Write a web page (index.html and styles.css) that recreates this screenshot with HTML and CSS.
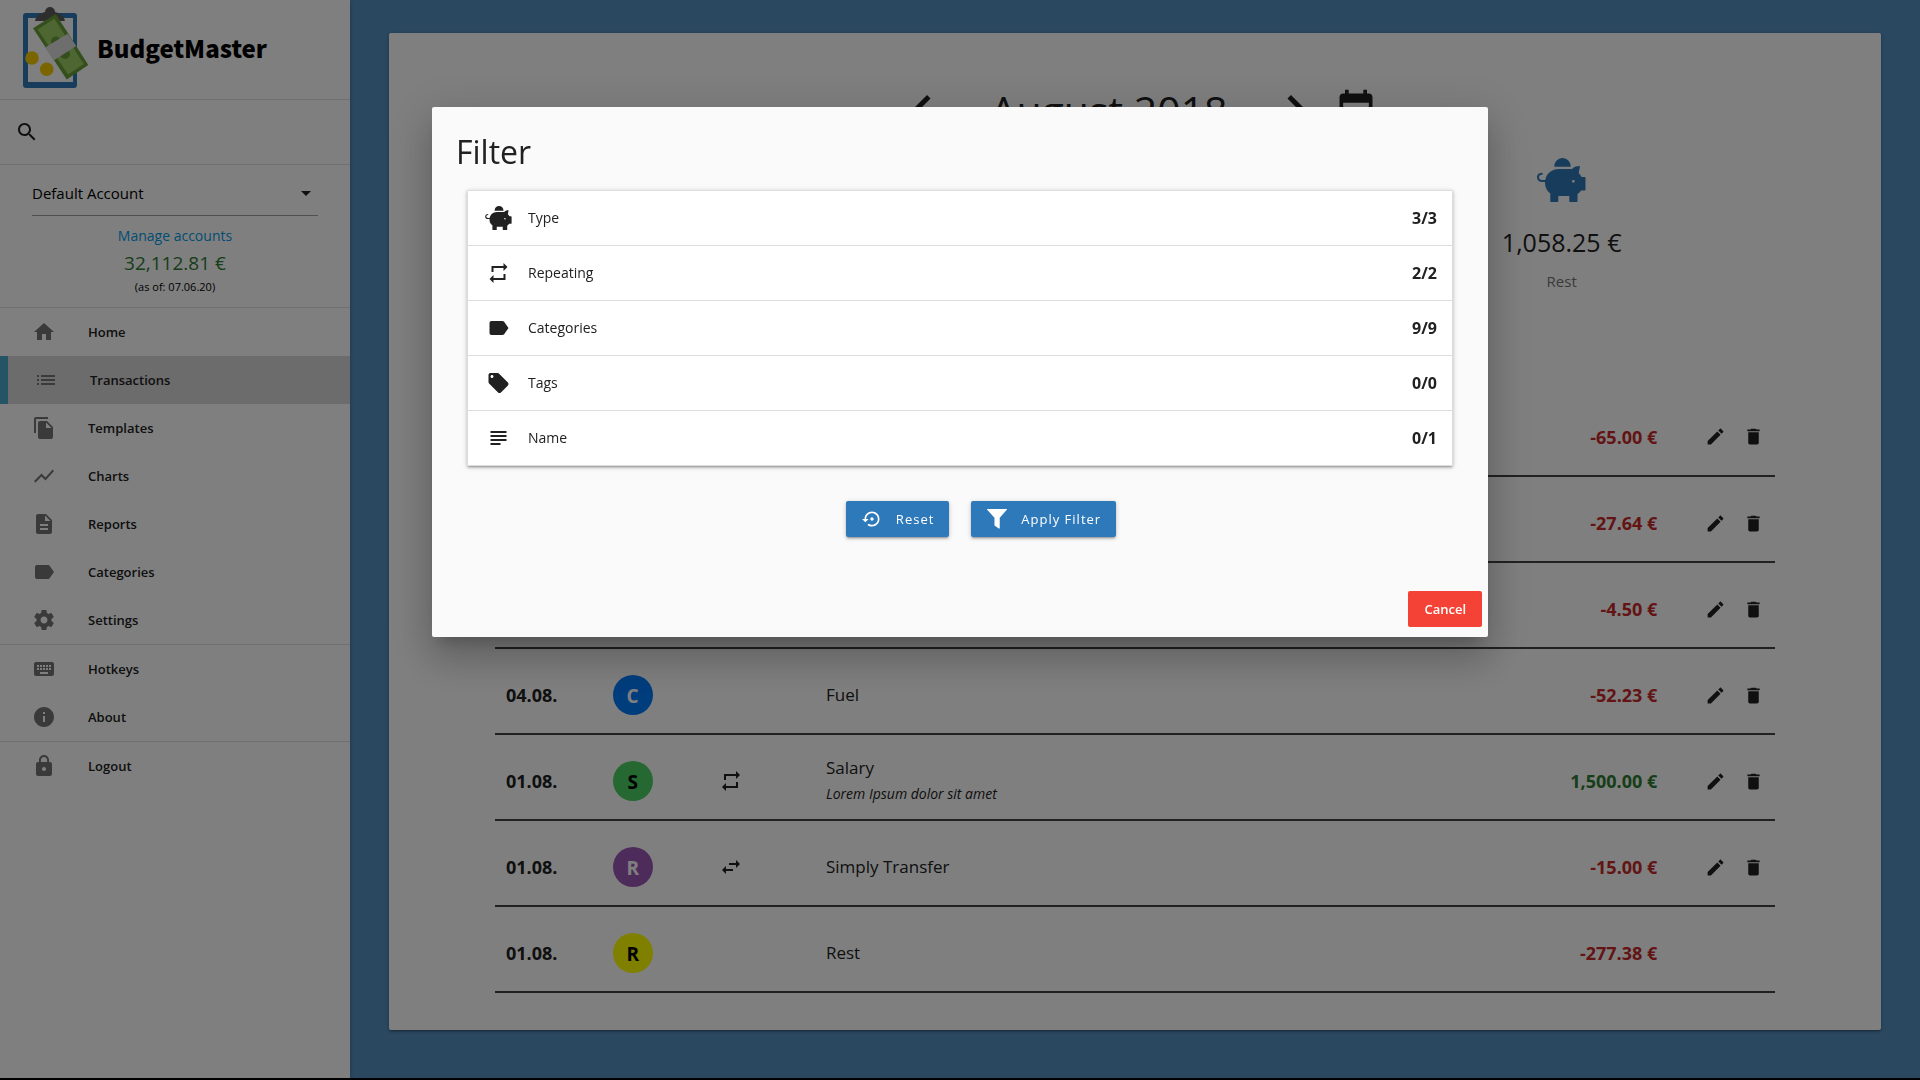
FILE: index.html
```html
<!DOCTYPE html>
<html lang="en">
<head>
<meta charset="utf-8">
<title>BudgetMaster</title>
<link rel="stylesheet" href="styles.css">
</head>
<body>
<svg class="sprite" aria-hidden="true">
  <symbol id="i-search" viewBox="0 0 24 24"><path d="M15.5 14h-.79l-.28-.27C15.41 12.59 16 11.11 16 9.5 16 5.91 13.09 3 9.5 3S3 5.91 3 9.5 5.91 16 9.5 16c1.61 0 3.09-.59 4.23-1.57l.27.28v.79l5 4.99L20.49 19l-4.99-5zm-6 0C7.01 14 5 11.99 5 9.5S7.01 5 9.5 5 14 7.01 14 9.5 11.99 14 9.5 14z"/></symbol>
  <symbol id="i-home" viewBox="0 0 24 24"><path d="M10 20v-6h4v6h5v-8h3L12 3 2 12h3v8z"/></symbol>
  <symbol id="i-list" viewBox="0 0 24 24"><path d="M3 13h2v-2H3v2zm0 4h2v-2H3v2zm0-8h2V7H3v2zm4 4h14v-2H7v2zm0 4h14v-2H7v2zM7 7v2h14V7H7z"/></symbol>
  <symbol id="i-copy" viewBox="0 0 24 24"><path d="M16 1H4c-1.1 0-2 .9-2 2v14h2V3h12V1zm-1 4l6 6v10c0 1.1-.9 2-2 2H7.99C6.89 23 6 22.1 6 21l.01-14c0-1.1.89-2 1.99-2h7zm-1 7h5.5L14 6.5V12z"/></symbol>
  <symbol id="i-chart" viewBox="0 0 24 24"><path d="M3.5 18.49l6-6.01 4 4L22 6.92l-1.41-1.41-7.09 7.97-4-4L2 16.99z"/></symbol>
  <symbol id="i-report" viewBox="0 0 24 24"><path d="M14 2H6c-1.1 0-1.99.9-1.99 2L4 20c0 1.1.89 2 1.99 2H18c1.1 0 2-.9 2-2V8l-6-6zm2 16H8v-2h8v2zm0-4H8v-2h8v2zm-3-5V3.5L18.5 9H13z"/></symbol>
  <symbol id="i-label" viewBox="0 0 24 24"><path d="M17.63 5.84C17.27 5.33 16.67 5 16 5L5 5.01C3.9 5.01 3 5.9 3 7v10c0 1.1.9 1.99 2 1.99L16 19c.67 0 1.27-.33 1.63-.84L22 12l-4.37-6.16z"/></symbol>
  <symbol id="i-settings" viewBox="0 0 24 24"><path d="M19.43 12.98c.04-.32.07-.64.07-.98s-.03-.66-.07-.98l2.11-1.65c.19-.15.24-.42.12-.64l-2-3.46c-.12-.22-.39-.3-.61-.22l-2.49 1c-.52-.4-1.08-.73-1.69-.98l-.38-2.65C14.46 2.18 14.25 2 14 2h-4c-.25 0-.46.18-.49.42l-.38 2.65c-.61.25-1.17.59-1.69.98l-2.49-1c-.23-.09-.49 0-.61.22l-2 3.46c-.13.22-.07.49.12.64l2.11 1.65c-.04.32-.07.65-.07.98s.03.66.07.98l-2.11 1.65c-.19.15-.24.42-.12.64l2 3.46c.12.22.39.3.61.22l2.49-1c.52.4 1.08.73 1.69.98l.38 2.65c.03.24.24.42.49.42h4c.25 0 .46-.18.49-.42l.38-2.65c.61-.25 1.17-.59 1.69-.98l2.49 1c.23.09.49 0 .61-.22l2-3.46c.12-.22.07-.49-.12-.64l-2.11-1.65zM12 15.5c-1.93 0-3.5-1.57-3.5-3.5s1.57-3.5 3.5-3.5 3.5 1.57 3.5 3.5-1.57 3.5-3.5 3.5z"/></symbol>
  <symbol id="i-keyboard" viewBox="0 0 24 24"><path d="M20 5H4c-1.1 0-1.99.9-1.99 2L2 17c0 1.1.9 2 2 2h16c1.1 0 2-.9 2-2V7c0-1.1-.9-2-2-2zm-9 3h2v2h-2V8zm0 3h2v2h-2v-2zM8 8h2v2H8V8zm0 3h2v2H8v-2zm-1 2H5v-2h2v2zm0-3H5V8h2v2zm9 7H8v-2h8v2zm0-4h-2v-2h2v2zm0-3h-2V8h2v2zm3 3h-2v-2h2v2zm0-3h-2V8h2v2z"/></symbol>
  <symbol id="i-info" viewBox="0 0 24 24"><path d="M12 2C6.48 2 2 6.48 2 12s4.48 10 10 10 10-4.48 10-10S17.52 2 12 2zm1 15h-2v-6h2v6zm0-8h-2V7h2v2z"/></symbol>
  <symbol id="i-lock" viewBox="0 0 24 24"><path d="M18 8h-1V6c0-2.76-2.24-5-5-5S7 3.24 7 6v2H6c-1.1 0-2 .9-2 2v10c0 1.1.9 2 2 2h12c1.1 0 2-.9 2-2V10c0-1.1-.9-2-2-2zm-6 9c-1.1 0-2-.9-2-2s.9-2 2-2 2 .9 2 2-.9 2-2 2zm3.1-9H8.9V6c0-1.71 1.39-3.1 3.1-3.1 1.71 0 3.1 1.39 3.1 3.1v2z"/></symbol>
  <symbol id="i-repeat" viewBox="0 0 24 24"><path d="M7 7h10v3l4-4-4-4v3H5v6h2V7zm10 10H7v-3l-4 4 4 4v-3h12v-6h-2v4z"/></symbol>
  <symbol id="i-transfer" viewBox="0 0 24 24"><path d="M6.99 11L3 15l3.99 4v-3H14v-2H6.99v-3zM21 9l-3.99-4v3H10v2h7.01v3L21 9z"/></symbol>
  <symbol id="i-tag" viewBox="0 0 24 24"><path d="M21.41 11.58l-9-9C12.05 2.22 11.55 2 11 2H4c-1.1 0-2 .9-2 2v7c0 .55.22 1.05.59 1.42l9 9c.36.36.86.58 1.41.58.55 0 1.05-.22 1.41-.59l7-7c.37-.36.59-.86.59-1.41 0-.55-.23-1.06-.59-1.42zM5.5 7C4.67 7 4 6.33 4 5.5S4.67 4 5.5 4 7 4.67 7 5.5 6.33 7 5.5 7z"/></symbol>
  <symbol id="i-subject" viewBox="0 0 24 24"><path d="M14 17H4v2h10v-2zm6-8H4v2h16V9zM4 15h16v-2H4v2zM4 5v2h16V5H4z"/></symbol>
  <symbol id="i-restore" viewBox="0 0 24 24"><path d="M14 12c0-1.1-.9-2-2-2s-2 .9-2 2 .9 2 2 2 2-.9 2-2zm-2-9c-4.97 0-9 4.03-9 9H0l4 4 4-4H5c0-3.87 3.13-7 7-7s7 3.13 7 7-3.13 7-7 7c-1.51 0-2.91-.49-4.06-1.3l-1.42 1.44C8.04 20.3 9.94 21 12 21c4.97 0 9-4.03 9-9s-4.03-9-9-9z"/></symbol>
  <symbol id="i-edit" viewBox="0 0 24 24"><path d="M3 17.25V21h3.75L17.81 9.94l-3.75-3.75L3 17.25zM20.71 7.04c.39-.39.39-1.02 0-1.41l-2.34-2.34c-.39-.39-1.02-.39-1.41 0l-1.83 1.83 3.75 3.75 1.83-1.83z"/></symbol>
  <symbol id="i-delete" viewBox="0 0 24 24"><path d="M6 19c0 1.100.9 2 2 2h8c1.100 0 2-.9 2-2V7H6v12zM19 4h-3.500l-1-1h-5l-1 1H5v2h14V4z"/></symbol>
  <symbol id="i-prev" viewBox="0 0 24 24"><path d="M15.410 7.410L14 6l-6 6 6 6 1.410-1.410L10.830 12z"/></symbol>
  <symbol id="i-next" viewBox="0 0 24 24"><path d="M10 6L8.590 7.410 13.170 12l-4.580 4.590L10 18l6-6z"/></symbol>
  <symbol id="i-event" viewBox="0 0 24 24"><path d="M17 12h-5v5h5v-5zM16 1v2H8V1H6v2H5c-1.110 0-1.990.9-1.990 2L3 19c0 1.100.89 2 2 2h14c1.100 0 2-.9 2-2V5c0-1.100-.9-2-2-2h-1V1h-2zm3 18H5V8h14v11z"/></symbol>
  <symbol id="i-funnel" viewBox="0 0 22 22"><path d="M.5 0h21c.5 0 .6.500.3.900L14 9.500V21c0 .600-.500.800-1 .500L8.600 18.500c-.300-.200-.400-.500-.400-.900V9.500L.2.900C-.1.500 0 0 .5 0z"/></symbol>
  <symbol id="i-pig" viewBox="0 0 49 44"><path d="M17.300 8.700C17.300 3.600 21 0 25.500 0s8.200 3.600 8.200 8.700z"/><path fill-rule="evenodd" d="M22 11h13c1.500-1.800 4-3 8-3l-1.300 7c1.300 1.200 2.200 2.500 2.800 4h3c.600 0 1 .4 1 1v11.500c0 .6-.4 1-1 1H44c-.9 1.400-2 2.600-3.500 3.600v6.900c0 .6-.4 1-1 1h-6.200c-.6 0-1-.4-1-1v-5h-11v5c0 .6-.4 1-1 1h-6c-.6 0-1-.4-1-1v-7.500C10 33 8 29.200 8 25 8 16.500 14 11 22 11zm14.300 10.900a1.400 1.400 0 1 0 0 2.800 1.400 1.400 0 0 0 0-2.800z"/><path fill="none" stroke="currentColor" stroke-width="2" stroke-linecap="round" d="M9 23H5.500C2.800 23 1 21.600 1 19.300c0-2.100 1.500-3.400 3.800-3.600"/></symbol>
</svg>

<div class="page">
  <aside class="sidebar">
    <a class="brand" href="#">
      <svg class="brand-mark" viewBox="0 0 70 82" aria-hidden="true">
        <rect x="0" y="6" width="54" height="75" rx="3" fill="#2e79b9"/>
        <rect x="5" y="11" width="45" height="64" fill="#fff"/>
        <path d="M12 14c1-5 5-8 10-9a5 5 0 0 1 10 0c5 1 9 4 10 9z" fill="#5c5c5c"/>
        <path d="M10 21.300L32.700 7l32.600 51-21.600 14.400z" fill="#689f38"/>
        <path d="M14.600 22.400l16.700-10.700 29.500 45.200-15.700 10.600z" fill="#9ccc65"/>
        <circle cx="33" cy="34.500" r="5" fill="#689f38"/>
        <circle cx="42" cy="47" r="5" fill="#689f38"/>
        <path d="M22 40.400l22.700-13.700 8.600 12.300-22.300 14.300z" fill="#ddd"/>
        <circle cx="9" cy="51" r="6.800" fill="#f7ca00"/>
        <circle cx="23.700" cy="62.300" r="6.800" fill="#f7ca00"/>
      </svg>
      <span class="brand-name">BudgetMaster</span>
    </a>
    <label class="search">
      <svg class="icon" role="img" aria-label="Search"><use href="#i-search"/></svg>
      <input class="search-input" type="search">
    </label>
    <section class="account">
      <div class="account-picker">
        <select class="account-select" aria-label="Account"><option>Default Account</option></select>
        <svg class="caret" viewBox="0 0 10 5" aria-hidden="true"><path d="M0 0l5 5 5-5z"/></svg>
      </div>
      <a class="account-link" href="#">Manage accounts</a>
      <span class="account-balance">32,112.81 €</span>
      <span class="account-date">(as of: 07.06.20)</span>
    </section>
    <nav class="nav">
      <a class="nav-item" href="#"><svg class="icon"><use href="#i-home"/></svg>Home</a>
      <a class="nav-item nav-active" href="#"><svg class="icon"><use href="#i-list"/></svg>Transactions</a>
      <a class="nav-item" href="#"><svg class="icon"><use href="#i-copy"/></svg>Templates</a>
      <a class="nav-item" href="#"><svg class="icon"><use href="#i-chart"/></svg>Charts</a>
      <a class="nav-item" href="#"><svg class="icon"><use href="#i-report"/></svg>Reports</a>
      <a class="nav-item" href="#"><svg class="icon"><use href="#i-label"/></svg>Categories</a>
      <a class="nav-item" href="#"><svg class="icon"><use href="#i-settings"/></svg>Settings</a>
    </nav>
    <nav class="nav">
      <a class="nav-item" href="#"><svg class="icon"><use href="#i-keyboard"/></svg>Hotkeys</a>
      <a class="nav-item" href="#"><svg class="icon"><use href="#i-info"/></svg>About</a>
    </nav>
    <nav class="nav">
      <a class="nav-item" href="#"><svg class="icon"><use href="#i-lock"/></svg>Logout</a>
    </nav>
  </aside>

  <main class="main">
    <div class="card">
      <header class="month">
        <button class="plain" aria-label="Previous month"><svg class="icon-chevron"><use href="#i-prev"/></svg></button>
        <h1 class="month-name">August 2018</h1>
        <button class="plain" aria-label="Next month"><svg class="icon-chevron"><use href="#i-next"/></svg></button>
        <button class="plain month-pick" aria-label="Pick date"><svg class="icon-calendar"><use href="#i-event"/></svg></button>
      </header>
      <section class="summary">
        <div class="summary-item">
          <svg class="summary-icon"><use href="#i-pig"/></svg>
          <span class="summary-value">1,058.25 €</span>
          <span class="summary-label">Rest</span>
        </div>
      </section>
      <table class="transactions">
        <colgroup><col class="c1"><col class="c1"><col class="c1"><col class="c5"><col class="c3"><col class="c1"></colgroup>
        <tbody>
          <tr><td></td><td></td><td></td><td></td><td class="amount negative">-65.00 €</td>
            <td><div class="actions"><button class="plain" aria-label="Edit"><svg class="icon-small"><use href="#i-edit"/></svg></button><button class="plain" aria-label="Delete"><svg class="icon-small"><use href="#i-delete"/></svg></button></div></td></tr>
          <tr><td></td><td></td><td></td><td></td><td class="amount negative">-27.64 €</td>
            <td><div class="actions"><button class="plain" aria-label="Edit"><svg class="icon-small"><use href="#i-edit"/></svg></button><button class="plain" aria-label="Delete"><svg class="icon-small"><use href="#i-delete"/></svg></button></div></td></tr>
          <tr><td></td><td></td><td></td><td></td><td class="amount negative">-4.50 €</td>
            <td><div class="actions"><button class="plain" aria-label="Edit"><svg class="icon-small"><use href="#i-edit"/></svg></button><button class="plain" aria-label="Delete"><svg class="icon-small"><use href="#i-delete"/></svg></button></div></td></tr>
          <tr><td class="date">04.08.</td><td><span class="badge blue">C</span></td><td></td><td>Fuel</td><td class="amount negative">-52.23 €</td>
            <td><div class="actions"><button class="plain" aria-label="Edit"><svg class="icon-small"><use href="#i-edit"/></svg></button><button class="plain" aria-label="Delete"><svg class="icon-small"><use href="#i-delete"/></svg></button></div></td></tr>
          <tr><td class="date">01.08.</td><td><span class="badge green">S</span></td><td><svg class="icon-kind"><use href="#i-repeat"/></svg></td><td>Salary<div class="note">Lorem Ipsum dolor sit amet</div></td><td class="amount positive">1,500.00 €</td>
            <td><div class="actions"><button class="plain" aria-label="Edit"><svg class="icon-small"><use href="#i-edit"/></svg></button><button class="plain" aria-label="Delete"><svg class="icon-small"><use href="#i-delete"/></svg></button></div></td></tr>
          <tr><td class="date">01.08.</td><td><span class="badge purple">R</span></td><td><svg class="icon-kind"><use href="#i-transfer"/></svg></td><td>Simply Transfer</td><td class="amount negative">-15.00 €</td>
            <td><div class="actions"><button class="plain" aria-label="Edit"><svg class="icon-small"><use href="#i-edit"/></svg></button><button class="plain" aria-label="Delete"><svg class="icon-small"><use href="#i-delete"/></svg></button></div></td></tr>
          <tr><td class="date">01.08.</td><td><span class="badge yellow">R</span></td><td></td><td>Rest</td><td class="amount negative">-277.38 €</td><td></td></tr>
        </tbody>
      </table>
    </div>
  </main>
</div>

<div class="overlay">
  <div class="modal" role="dialog" aria-modal="true" aria-labelledby="filter-title">
    <div class="modal-content">
      <h2 class="modal-title" id="filter-title">Filter</h2>
      <ul class="filters">
        <li class="filter"><svg class="filter-icon"><use href="#i-pig"/></svg>Type<span class="filter-count">3/3</span></li>
        <li class="filter"><svg class="filter-icon"><use href="#i-repeat"/></svg>Repeating<span class="filter-count">2/2</span></li>
        <li class="filter"><svg class="filter-icon"><use href="#i-label"/></svg>Categories<span class="filter-count">9/9</span></li>
        <li class="filter"><svg class="filter-icon"><use href="#i-tag"/></svg>Tags<span class="filter-count">0/0</span></li>
        <li class="filter"><svg class="filter-icon"><use href="#i-subject"/></svg>Name<span class="filter-count">0/1</span></li>
      </ul>
      <div class="modal-buttons">
        <button class="button primary"><svg class="button-icon"><use href="#i-restore"/></svg>Reset</button>
        <button class="button primary"><svg class="button-icon"><use href="#i-funnel"/></svg>Apply Filter</button>
      </div>
    </div>
    <footer class="modal-footer"><button class="button danger">Cancel</button></footer>
  </div>
</div>
</body>
</html>
```
FILE: styles.css
```css
* { box-sizing: border-box; }

body {
  margin: 0;
  background: #000;
  color: #212121;
  font: 14px/22px "Open Sans", "Noto Sans", sans-serif;
}

svg { display: block; fill: currentColor; }
a { color: inherit; text-decoration: none; }
.sprite { display: none; }
.icon { width: 24px; height: 24px; flex: none; }

.plain {
  padding: 0;
  border: 0;
  background: none;
  color: inherit;
  cursor: pointer;
}

.page {
  display: flex;
  min-height: calc(100vh - 2px);
  background: #5691c3;
}

/* Sidebar */
.sidebar {
  flex: none;
  width: 350px;
  background: #fff;
  box-shadow: 0 2px 2px 0 rgba(0, 0, 0, .14), 0 3px 1px -2px rgba(0, 0, 0, .12), 0 1px 5px 0 rgba(0, 0, 0, .2);
}

.brand {
  display: flex;
  align-items: center;
  gap: 4px;
  height: 99px;
  padding: 0 0 3px 23px;
  color: #000;
}
.brand-mark { width: 70px; height: 82px; overflow: visible; }
.brand-name { font: 900 24px/48px "Noto Sans CJK SC", "Open Sans", sans-serif; }

.search {
  display: flex;
  align-items: center;
  gap: 12px;
  height: 65px;
  padding: 0 15px;
  border-top: 1px solid #e0e0e0;
}
.search-input {
  flex: 1;
  min-width: 0;
  border: 0;
  outline: 0;
  background: none;
  font: inherit;
}

.account {
  display: flex;
  flex-direction: column;
  align-items: center;
  height: 143px;
  padding: 4px 32px 0;
  border-top: 1px solid #e0e0e0;
}
.account-picker {
  display: flex;
  align-items: center;
  align-self: stretch;
  padding-top: 2px;
  border-bottom: 1px solid #9e9e9e;
  margin-bottom: 8px;
}
.account-select {
  flex: 1;
  height: 44px;
  margin-right: -17px;
  padding: 0;
  border: 0;
  appearance: none;
  background: none;
  color: #000;
  font: inherit;
  font-size: 15px;
}
.caret { width: 10px; height: 5px; margin-right: 7px; }
.account-link { line-height: 24px; color: #039be5; }
.account-balance { font-size: 19px; line-height: 30px; color: #2e7d32; }
.account-date { font-size: 11px; line-height: 18px; color: #000; }

.nav { border-top: 1px solid #e0e0e0; }
.nav-item {
  display: flex;
  align-items: center;
  gap: 32px;
  height: 48px;
  padding: 0 32px;
  font-size: 13px;
  font-weight: 600;
}
.nav-item .icon { color: #757575; }
.nav-active {
  padding-left: 26px;
  border-left: 8px solid #4aa9cf;
  background: #d8d8d8;
}

/* Month card */
.main { flex: 1; padding: 33px 39px 48px; }
.card {
  padding: 47px 106px 37px;
  border-radius: 2px;
  background: #fff;
  box-shadow: 0 2px 2px 0 rgba(0, 0, 0, .14), 0 3px 1px -2px rgba(0, 0, 0, .12), 0 1px 5px 0 rgba(0, 0, 0, .2);
}
.month { display: flex; align-items: center; justify-content: center; }
.month-name {
  width: 314px;
  margin: 0;
  font-size: 41px;
  font-weight: 400;
  line-height: 60px;
  text-align: center;
}
.month-pick { margin-left: 8px; }
.icon-chevron { width: 60px; height: 60px; }
.icon-calendar { width: 44px; height: 44px; }

.summary {
  display: grid;
  grid-template-columns: repeat(3, 1fr);
  height: 250px;
  padding-top: 18px;
}
.summary-item {
  grid-column: 3;
  display: flex;
  flex-direction: column;
  align-items: center;
}
.summary-icon { width: 49px; height: 44px; color: #2e79b9; }
.summary-value { margin-top: 20px; font-size: 25px; line-height: 40px; }
.summary-label { margin-top: 7px; font-size: 15px; line-height: 24px; color: #757575; }

/* Transactions */
.transactions {
  width: 100%;
  table-layout: fixed;
  border-collapse: collapse;
  font-size: 17px;
  line-height: 24px;
}
.c1 { width: calc(100% / 12); }
.c3 { width: 25%; }
.c5 { width: calc(500% / 12); }
.transactions tr { height: 86px; border-bottom: 2px solid #424242; }
.transactions td { padding: 8px 11px 0; }
.date { font-size: 18px; font-weight: 700; }
.amount { font-size: 18px; font-weight: 700; text-align: right; }
.negative { color: #c62828; }
.positive { color: #2e7d32; }
.note { margin-top: 2px; font-size: 14px; font-style: italic; }
.badge {
  display: grid;
  place-items: center;
  width: 40px;
  height: 40px;
  padding-top: 2px;
  border-radius: 50%;
  font-size: 19px;
  font-weight: 700;
}
.blue { background: #007afa; color: #fff; }
.green { background: #4cd162; color: #000; }
.purple { background: #9b59b6; color: #fff; }
.yellow { background: #ff0; color: #000; }
.icon-kind { width: 24px; height: 24px; }
.icon-small { width: 21px; height: 21px; }
.actions { display: flex; justify-content: flex-end; gap: 17px; }

/* Filter dialog */
.overlay {
  position: fixed;
  inset: 0;
  display: flex;
  align-items: flex-start;
  justify-content: center;
  padding-top: 107px;
  background: rgba(0, 0, 0, .5);
}
.modal {
  width: 55%;
  border-radius: 2px;
  background: #fafafa;
  box-shadow: 0 24px 38px 3px rgba(0, 0, 0, .14), 0 9px 46px 8px rgba(0, 0, 0, .12), 0 11px 15px -7px rgba(0, 0, 0, .2);
}
.modal-content { padding: 24px 24px 44px; }
.modal-title { margin: 0 0 17px; font-size: 32px; font-weight: 400; line-height: 42px; }
.filters {
  margin: 0 11px;
  padding: 0;
  border: 1px solid #ddd;
  border-bottom: 0;
  background: #fff;
  list-style: none;
  box-shadow: 0 2px 2px 0 rgba(0, 0, 0, .14), 0 3px 1px -2px rgba(0, 0, 0, .12), 0 1px 5px 0 rgba(0, 0, 0, .2);
}
.filter {
  display: flex;
  align-items: center;
  height: 55px;
  padding: 0 15px 0 17px;
  border-bottom: 1px solid #ddd;
}
.filter-icon { width: 27px; height: 24px; margin-right: 16px; }
.filter-count { margin-left: auto; font-size: 16px; font-weight: 700; }

.modal-buttons { display: flex; justify-content: center; gap: 22px; padding: 35px 0 0 42px; }
.button {
  display: flex;
  align-items: center;
  height: 36px;
  padding: 0 16px;
  border: 0;
  border-radius: 2px;
  color: #fff;
  font: 600 13px/36px "Open Sans", "Noto Sans", sans-serif;
  cursor: pointer;
}
.primary {
  padding-right: 15px;
  background: #2e79b9;
  font-weight: 500;
  letter-spacing: 1px;
  box-shadow: 0 2px 2px 0 rgba(0, 0, 0, .14), 0 3px 1px -2px rgba(0, 0, 0, .12), 0 1px 5px 0 rgba(0, 0, 0, .2);
}
.danger { background: #f44336; }
.button-icon { width: 20px; height: 20px; margin-right: 14px; }
.modal-footer { display: flex; justify-content: flex-end; padding: 10px 6px; }
```
